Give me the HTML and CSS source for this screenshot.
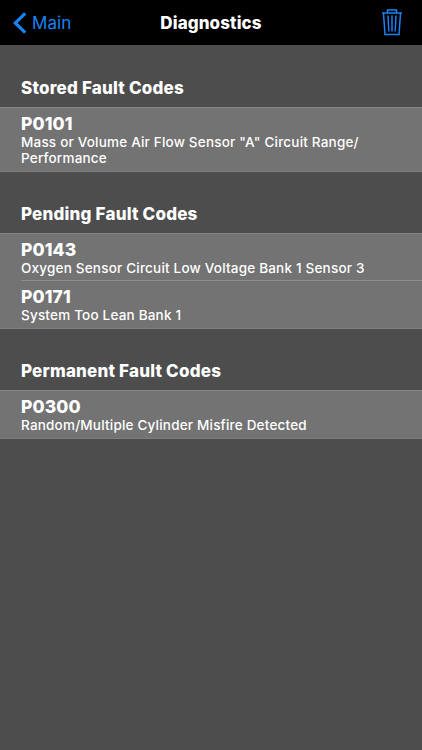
FILE: index.html
```html
<!doctype html>
<html lang="en">
<head>
    <meta charset="UTF-8">
    <meta name="viewport" content="width=device-width, initial-scale=1.0">
    <title>Diagnostics</title>
    <link rel="stylesheet" href="styles.css">
</head>
<body>

<div class="header">
    <a class="back" href="#">
        <svg class="back-icon" width="14" height="22" viewBox="0 0 14 22">
            <path d="M12.2 1.3L2.2 11L12.2 20.7"/>
        </svg>
        <span class="back-text">Main</span>
    </a>
    <h1 class="title">Diagnostics</h1>
    <a class="trash" href="#">
        <svg class="trash-icon" width="22" height="28" viewBox="0 0 22 28">
            <path d="M1 4H21M6.5 4V1H15.5V4M2.5 4L4 25.5H18L19.5 4"/>
            <path d="M7 6.5L7.8 22.5M11 6.5V22.5M15 6.5L14.2 22.5"/>
        </svg>
    </a>
</div>

<div class="main">
    <h2 class="group-title">Stored Fault Codes</h2>
    <ul class="codes">
        <li class="code">
            <strong class="code-id">P0101</strong>
            <p class="code-text">Mass or Volume Air Flow Sensor "A" Circuit Range/<br>Performance</p>
        </li>
    </ul>

    <h2 class="group-title">Pending Fault Codes</h2>
    <ul class="codes">
        <li class="code">
            <strong class="code-id">P0143</strong>
            <p class="code-text">Oxygen Sensor Circuit Low Voltage Bank 1 Sensor 3</p>
        </li>
        <li class="code">
            <strong class="code-id">P0171</strong>
            <p class="code-text">System Too Lean Bank 1</p>
        </li>
    </ul>

    <h2 class="group-title">Permanent Fault Codes</h2>
    <ul class="codes">
        <li class="code">
            <strong class="code-id">P0300</strong>
            <p class="code-text">Random/Multiple Cylinder Misfire Detected</p>
        </li>
    </ul>
</div>

</body>
</html>
```

FILE: styles.css
```css
*{
    margin: 0;
    padding: 0;
    box-sizing: border-box;
}
a{
    color:#1783f5;
    text-decoration: none;
}
ul{
    list-style: none;
}

body,html{
    width:100%;
    height:100%;
    overflow: hidden;
}
body{
    background-color: #4d4d4d;
    color:#fff;
    font-family: Inter, "Liberation Sans", sans-serif;
}

.header{
    display: grid;
    grid-template-columns: 1fr auto 1fr;
    align-items: center;
    height: 45px;
    padding: 0 19px 0 13px;
    background-color: #000;
}
.back{
    display: flex;
    align-items: center;
    gap: 5px;
}
.back-icon,
.trash-icon{
    display: block;
    fill: none;
    stroke: #1783f5;
}
.back-icon{
    stroke-width: 3.2;
}
.back-text{
    font-size: 17px;
    line-height: 22px;
    letter-spacing: .1px;
}
.title{
    padding-left: 6px;
    font-size: 17px;
    line-height: 22px;
    font-weight: 800;
    letter-spacing: .1px;
}
.trash{
    justify-self: end;
}
.trash-icon{
    stroke-width: 1.5;
}

.group-title{
    height: 62px;
    padding: 32px 21px 0;
    font-size: 17px;
    line-height: 22px;
    font-weight: 800;
    letter-spacing: .2px;
}
.codes + .group-title{
    height: 61px;
    padding-top: 31px;
}
.codes{
    background-color: #737373;
    border-top: 1px solid #858585;
    border-bottom: 1px solid #7e7e7e;
}
.code{
    position: relative;
    padding: 5px 0 5px 21px;
}
.code + .code:before{
    content: '';
    position: absolute;
    top: -1px;
    left: 21px;
    right: 0;
    height: 1px;
    background-color: #8c8c8c;
}
.code-id{
    display: block;
    font-size: 17.5px;
    line-height: 21px;
    font-weight: 800;
    letter-spacing: .1px;
}
.code-text{
    font-size: 13.5px;
    line-height: 16px;
    font-weight: 500;
    letter-spacing: .2px;
}
```
